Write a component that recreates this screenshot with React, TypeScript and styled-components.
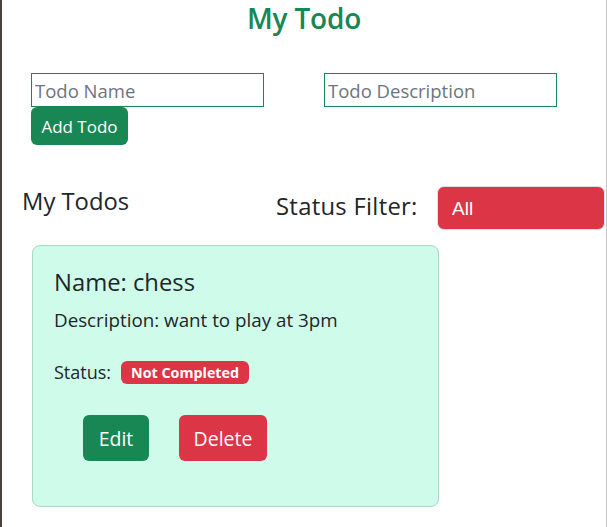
import React from "react";
import styled, { createGlobalStyle } from "styled-components";

const Global = createGlobalStyle`
  html, body { margin: 0; padding: 0; background: #ffffff; }
  body { font-family: "Open Sans", "Noto Sans", sans-serif; color: #212529; }
  * { box-sizing: border-box; }
`;

const Page = styled.div`
  width: 607px;
  height: 527px;
  border-left: 2px solid #4b403c;
  border-right: 1px solid #c4c4c4;
  background: #ffffff;
  overflow: hidden;
`;

const Title = styled.h1`
  margin: 0;
  height: 37px;
  line-height: 37px;
  text-align: center;
  font-size: 28px;
  font-weight: 600;
  color: #198754;
  letter-spacing: -0.2px;
`;

const Form = styled.div`
  margin-top: 36px;
  padding-left: 29px;
`;

const InputRow = styled.div`
  display: flex;
  gap: 60px;
`;

const TextInput = styled.input`
  width: 233px;
  height: 34px;
  border: 1px solid #198754;
  border-radius: 0;
  padding: 0 3px;
  font-family: "Open Sans", sans-serif;
  font-size: 18.5px;
  color: #212529;
  outline: none;
  &::placeholder { color: #6c757d; }
`;

const Button = styled.button<{ $variant: "success" | "danger"; $w: number; $h: number }>`
  width: ${(p) => p.$w}px;
  height: ${(p) => p.$h}px;
  border: none;
  border-radius: 6px;
  background: ${(p) => (p.$variant === "success" ? "#198754" : "#dc3545")};
  color: #ffffff;
  font-family: "Open Sans", sans-serif;
  font-size: ${(p) => (p.$h > 40 ? 19.5 : 17)}px;
  padding: 0;
  cursor: pointer;
`;

const Header = styled.div`
  display: flex;
  align-items: center;
  margin-top: 41px;
  height: 44px;
`;

const SectionTitle = styled.h3`
  margin: 0 0 0 20px;
  font-size: 23.8px;
  font-weight: 500;
  width: 254px;
  position: relative;
  top: -7px;
`;

const FilterLabel = styled.span`
  font-size: 23.8px;
  font-weight: 500;
  letter-spacing: 0.3px;
  width: 161px;
  position: relative;
  top: -2px;
`;

const Select = styled.select`
  width: 168px;
  height: 44px;
  border: 1px solid #dee2e6;
  border-radius: 7px;
  background: #dc3545;
  color: #ffffff;
  font-family: "Liberation Sans", Arial, sans-serif;
  font-size: 19px;
  padding: 0 0 0 14px;
  appearance: none;
  outline: none;
`;

const Card = styled.div`
  margin: 15px 0 0 30px;
  width: 407px;
  height: 262px;
  background: #cffcea;
  border: 1px solid #a6d8c4;
  border-radius: 8px;
  padding: 20px 21px;
`;

const CardName = styled.h4`
  margin: 0;
  font-size: 23.8px;
  font-weight: 500;
  line-height: 33px;
`;

const CardText = styled.p`
  margin: 8px 0 0;
  font-size: 18.8px;
  line-height: 27px;
`;

const StatusRow = styled.div`
  display: flex;
  align-items: center;
  gap: 10px;
  margin-top: 26px;
  font-size: 18px;
`;

const Badge = styled.span`
  display: inline-flex;
  align-items: center;
  justify-content: center;
  width: 128px;
  height: 23px;
  border-radius: 6px;
  background: #dc3545;
  color: #ffffff;
  font-size: 14.3px;
  font-weight: 700;
`;

const Actions = styled.div`
  display: flex;
  gap: 30px;
  margin: 31px 0 0 29px;
`;

export default function App() {
  return (
    <>
      <Global />
      <Page>
        <Title>My Todo</Title>
        <Form>
          <InputRow>
            <TextInput placeholder="Todo Name" />
            <TextInput placeholder="Todo Description" />
          </InputRow>
          <Button $variant="success" $w={97} $h={38}>Add Todo</Button>
        </Form>
        <Header>
          <SectionTitle>My Todos</SectionTitle>
          <FilterLabel>Status Filter:</FilterLabel>
          <Select defaultValue="All">
            <option>All</option>
            <option>Completed</option>
            <option>Not Completed</option>
          </Select>
        </Header>
        <Card>
          <CardName>Name: chess</CardName>
          <CardText>Description: want to play at 3pm</CardText>
          <StatusRow>
            <span>Status:</span>
            <Badge>Not Completed</Badge>
          </StatusRow>
          <Actions>
            <Button $variant="success" $w={66} $h={46}>Edit</Button>
            <Button $variant="danger" $w={88} $h={46}>Delete</Button>
          </Actions>
        </Card>
      </Page>
    </>
  );
}
